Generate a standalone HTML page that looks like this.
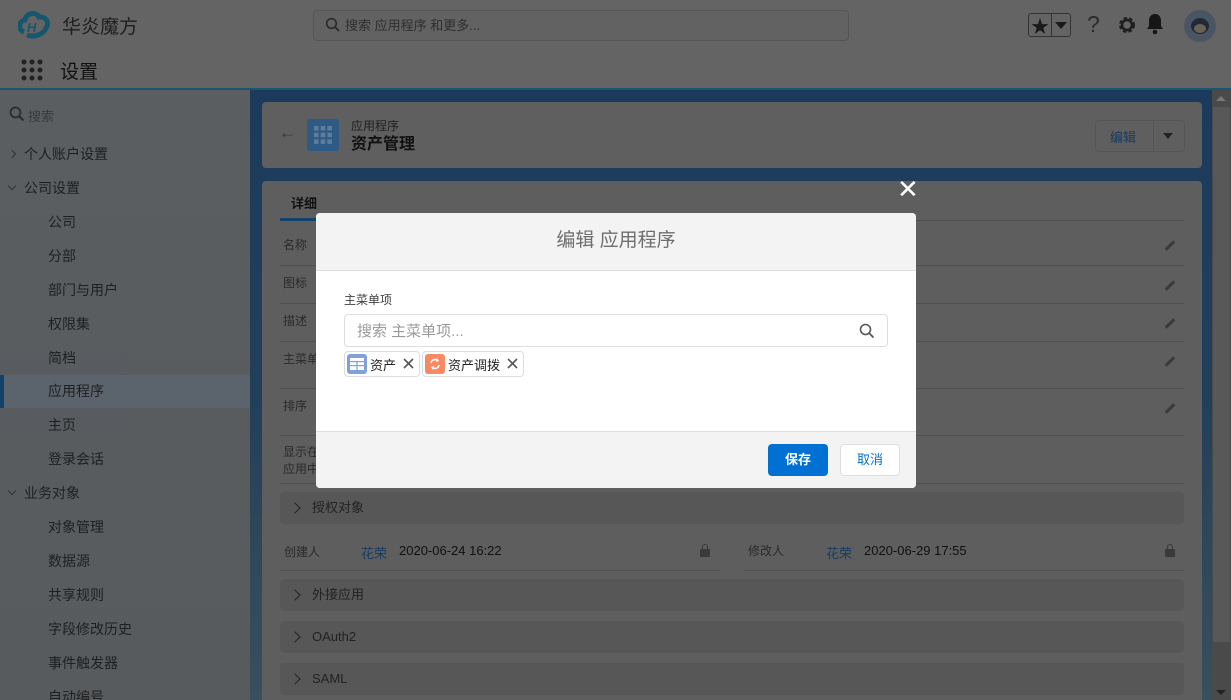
<!DOCTYPE html>
<html style="width:1231px;height:700px;overflow:hidden"><head><meta charset="utf-8"><style>
*{box-sizing:border-box;margin:0;padding:0}
body{width:1231px;height:700px;overflow:hidden;position:relative;background:#5e5e5e;font-family:"Liberation Sans","Noto Sans CJK SC",sans-serif;font-size:13px;color:#1c1c1c}
.a{position:absolute}
.side div{position:absolute;left:0;width:250px;height:34px;line-height:34px;font-size:14px;color:#1f1f1f}
.row{position:absolute;left:280px;width:904px;border-bottom:1px solid #505050;font-size:12px;color:#2a2a2a}
.sec{position:absolute;left:280px;width:904px;height:32px;background:#575757;border-radius:4px;line-height:32px;font-size:13px;color:#222;padding-left:32px}
.sec:before{content:"";position:absolute;left:11px;top:12px;width:7px;height:7px;border-right:1.6px solid #222;border-top:1.6px solid #222;transform:rotate(45deg)}
.pen{position:absolute;right:8px;width:12px;height:3px;background:#3a3a3a;transform:rotate(-45deg)}
</style></head><body>
<div class="a" style="left:0;top:0;width:1231px;height:88px;background:#646464"></div>
<div class="a" style="left:0;top:88px;width:1231px;height:2px;background:#1b5670"></div>
<svg class="a" style="left:18px;top:10px" width="32" height="30" viewBox="0 0 32 30"><path d="M6 22 C0 20 0 11 7 10 C8 3 18 1 21 7 C28 6 32 13 28 18 C26 24 16 28 9 25" fill="none" stroke="#15576e" stroke-width="5"/><text x="9" y="22" font-size="13" font-weight="bold" font-style="italic" fill="#15576e" font-family="Liberation Sans">H</text></svg>
<div class="a" style="left:62px;top:12px;font-size:19px;color:#1e1e1e">华炎魔方</div>
<div class="a" style="left:313px;top:10px;width:536px;height:31px;border:1px solid #555;border-radius:4px;background:#626262"></div>
<svg class="a" style="left:325px;top:17px" width="16" height="16"><circle cx="6.5" cy="6.5" r="4.8" fill="none" stroke="#2a2a2a" stroke-width="1.6"/><path d="M10 10l4 4" stroke="#2a2a2a" stroke-width="1.8"/></svg>
<div class="a" style="left:345px;top:15px;font-size:13px;color:#2e2e2e">搜索 应用程序 和更多...</div>
<div class="a" style="left:1028px;top:13px;width:43px;height:24px;border:1px solid #333;border-radius:3px"></div>
<div class="a" style="left:1051px;top:13px;width:1px;height:24px;background:#333"></div>
<div class="a" style="left:1031px;top:13px;font-size:18px;color:#1a1a1a">★</div>
<div class="a" style="left:1055px;top:22px;width:0;height:0;border-left:6px solid transparent;border-right:6px solid transparent;border-top:7px solid #1a1a1a"></div>
<div class="a" style="left:1087px;top:11px;font-size:23px;color:#2a2a2a">?</div>
<svg class="a" style="left:1118px;top:16px" width="18" height="18" viewBox="0 0 18 18"><circle cx="9" cy="9" r="6" fill="none" stroke="#1e1e1e" stroke-width="4" stroke-dasharray="3 2"/><circle cx="9" cy="9" r="5" fill="none" stroke="#1e1e1e" stroke-width="2.5"/></svg>
<svg class="a" style="left:1145px;top:13px" width="20" height="22" viewBox="0 0 20 22"><path d="M10 1c-4 0-6 3-6 7v5l-2 3h16l-2-3V8c0-4-2-7-6-7z" fill="#161616"/><circle cx="10" cy="19" r="2.3" fill="#161616"/></svg>
<div class="a" style="left:1184px;top:10px;width:32px;height:32px;border-radius:50%;background:#4a5563"></div>
<div class="a" style="left:1191px;top:18px;width:18px;height:16px;border-radius:50%;background:#1f2a36"></div>
<div class="a" style="left:1194px;top:24px;width:12px;height:9px;border-radius:50%;background:#6b6257"></div>
<svg class="a" style="left:21px;top:59px" width="22" height="22"><g fill="#222"><circle cx="3" cy="3" r="2.5"/><circle cx="11" cy="3" r="2.5"/><circle cx="19" cy="3" r="2.5"/><circle cx="3" cy="11" r="2.5"/><circle cx="11" cy="11" r="2.5"/><circle cx="19" cy="11" r="2.5"/><circle cx="3" cy="19" r="2.5"/><circle cx="11" cy="19" r="2.5"/><circle cx="19" cy="19" r="2.5"/></g></svg>
<div class="a" style="left:60px;top:57px;font-size:19px;color:#111">设置</div>
<div class="a" style="left:0;top:90px;width:250px;height:610px;background:linear-gradient(#5a5e61,#575b5e)"></div>
<svg class="a" style="left:9px;top:106px" width="16" height="16"><circle cx="6.5" cy="6.5" r="5" fill="none" stroke="#2a2a2a" stroke-width="1.7"/><path d="M10 10l4.5 4.5" stroke="#2a2a2a" stroke-width="2"/></svg>
<div class="a" style="left:28px;top:106px;font-size:13px;color:#3a3a3a">搜索</div>
<div class="a" style="left:0;top:375px;width:250px;height:33px;background:#5b646d"></div>
<div class="a" style="left:0;top:375px;width:4px;height:33px;background:#12426a"></div>
<div class="side">
<div style="top:137px;padding-left:24px">个人账户设置</div>
<div style="top:171px;padding-left:24px">公司设置</div>
<div style="top:205px;padding-left:48px">公司</div>
<div style="top:239px;padding-left:48px">分部</div>
<div style="top:273px;padding-left:48px">部门与用户</div>
<div style="top:307px;padding-left:48px">权限集</div>
<div style="top:341px;padding-left:48px">简档</div>
<div style="top:374px;padding-left:48px">应用程序</div>
<div style="top:408px;padding-left:48px">主页</div>
<div style="top:442px;padding-left:48px">登录会话</div>
<div style="top:476px;padding-left:24px">业务对象</div>
<div style="top:510px;padding-left:48px">对象管理</div>
<div style="top:544px;padding-left:48px">数据源</div>
<div style="top:578px;padding-left:48px">共享规则</div>
<div style="top:612px;padding-left:48px">字段修改历史</div>
<div style="top:646px;padding-left:48px">事件触发器</div>
<div style="top:680px;padding-left:48px">自动编号</div>
</div>
<div class="a" style="left:9px;top:151px;width:6px;height:6px;border-right:1.3px solid #333;border-top:1.3px solid #333;transform:rotate(45deg)"></div>
<div class="a" style="left:9px;top:183px;width:6px;height:6px;border-right:1.3px solid #333;border-bottom:1.3px solid #333;transform:rotate(45deg)"></div>
<div class="a" style="left:9px;top:488px;width:6px;height:6px;border-right:1.3px solid #333;border-bottom:1.3px solid #333;transform:rotate(45deg)"></div>
<div class="a" style="left:250px;top:90px;width:962px;height:610px;background:linear-gradient(180deg,#1c3a5c 0%,#223f5a 50%,#3a4f5c 100%)"></div>
<div class="a" style="left:1212px;top:90px;width:19px;height:610px;background:#4a4a4a"></div>
<div class="a" style="left:1213px;top:107px;width:17px;height:535px;background:#585858"></div>
<div class="a" style="left:1216px;top:96px;border-left:5px solid transparent;border-right:5px solid transparent;border-bottom:5px solid #777"></div>
<div class="a" style="left:1216px;top:690px;border-left:5px solid transparent;border-right:5px solid transparent;border-top:5px solid #222"></div>
<div class="a" style="left:262px;top:102px;width:940px;height:66px;background:#5f5f5f;border-radius:4px"></div>
<div class="a" style="left:279px;top:123px;font-size:17px;color:#333">←</div>
<div class="a" style="left:307px;top:119px;width:32px;height:32px;background:#2d5b85;border-radius:3px"></div>
<svg class="a" style="left:314px;top:126px" width="18" height="18"><g fill="#5f7d99"><rect x="0" y="0" width="4.5" height="4.5"/><rect x="6.7" y="0" width="4.5" height="4.5"/><rect x="13.4" y="0" width="4.5" height="4.5"/><rect x="0" y="6.7" width="4.5" height="4.5"/><rect x="6.7" y="6.7" width="4.5" height="4.5"/><rect x="13.4" y="6.7" width="4.5" height="4.5"/><rect x="0" y="13.4" width="4.5" height="4.5"/><rect x="6.7" y="13.4" width="4.5" height="4.5"/><rect x="13.4" y="13.4" width="4.5" height="4.5"/></g></svg>
<div class="a" style="left:351px;top:117px;font-size:12px;color:#1f1f1f">应用程序</div>
<div class="a" style="left:351px;top:130px;font-size:16px;font-weight:bold;color:#111">资产管理</div>
<div class="a" style="left:1095px;top:120px;width:90px;height:32px;border:1px solid #555;border-radius:4px"></div>
<div class="a" style="left:1153px;top:120px;width:1px;height:32px;background:#555"></div>
<div class="a" style="left:1110px;top:127px;font-size:13px;color:#163b60">编辑</div>
<div class="a" style="left:1163px;top:133px;border-left:5px solid transparent;border-right:5px solid transparent;border-top:6px solid #222"></div>
<div class="a" style="left:262px;top:181px;width:940px;height:519px;background:#5e5e5e;border-radius:4px 4px 0 0"></div>
<div class="a" style="left:291px;top:193px;font-size:13px;font-weight:bold;color:#111">详细</div>
<div class="a" style="left:280px;top:220px;width:904px;height:1px;background:#505050"></div>
<div class="a" style="left:280px;top:218px;width:40px;height:3px;background:#12426a"></div>
<div class="row" style="top:222px;height:44px"><span class="a" style="left:3px;top:14px">名称</span><span class="pen" style="top:22px"></span></div>
<div class="row" style="top:266px;height:38px"><span class="a" style="left:3px;top:8px">图标</span><span class="pen" style="top:18px"></span></div>
<div class="row" style="top:304px;height:38px"><span class="a" style="left:3px;top:8px">描述</span><span class="pen" style="top:18px"></span></div>
<div class="row" style="top:342px;height:47px"><span class="a" style="left:3px;top:8px">主菜单</span><span class="pen" style="top:18px"></span></div>
<div class="row" style="top:389px;height:47px"><span class="a" style="left:3px;top:8px">排序</span><span class="pen" style="top:18px"></span></div>
<div class="row" style="top:436px;height:48px"><span class="a" style="left:3px;top:8px;line-height:17px">显示在<br>应用中</span></div>
<div class="sec" style="top:492px">授权对象</div>
<div class="a" style="left:284px;top:543px;font-size:12px;color:#2a2a2a">创建人</div>
<div class="a" style="left:361px;top:543px;font-size:13px;color:#163b60">花荣</div>
<div class="a" style="left:399px;top:543px;font-size:13px;color:#111">2020-06-24 16:22</div>
<div class="a" style="left:280px;top:570px;width:440px;height:1px;background:#505050"></div>
<div class="a" style="left:748px;top:542px;font-size:12px;color:#2a2a2a">修改人</div>
<div class="a" style="left:826px;top:543px;font-size:13px;color:#163b60">花荣</div>
<div class="a" style="left:864px;top:543px;font-size:13px;color:#111">2020-06-29 17:55</div>
<div class="a" style="left:744px;top:570px;width:440px;height:1px;background:#505050"></div>
<div class="a" style="left:700px;top:549px;width:10px;height:8px;background:#3a3a3a;border-radius:1px"></div>
<div class="a" style="left:702px;top:544px;width:6px;height:7px;border:1.5px solid #3a3a3a;border-radius:3px 3px 0 0"></div>
<div class="a" style="left:1165px;top:549px;width:10px;height:8px;background:#3a3a3a;border-radius:1px"></div>
<div class="a" style="left:1167px;top:544px;width:6px;height:7px;border:1.5px solid #3a3a3a;border-radius:3px 3px 0 0"></div>
<div class="sec" style="top:579px">外接应用</div>
<div class="sec" style="top:621px">OAuth2</div>
<div class="sec" style="top:663px">SAML</div>
<div class="a" style="left:897px;top:174px;font-size:26px;color:#fff;line-height:30px">✕</div>
<div class="a" style="left:316px;top:213px;width:600px;height:275px;background:#fff;border-radius:4px;overflow:hidden">
 <div class="a" style="left:0;top:0;width:600px;height:58px;background:#f3f3f3;border-bottom:1px solid #ddd;text-align:center;line-height:56px;font-size:19px;color:#6e6e6e">编辑 应用程序</div>
 <div class="a" style="left:28px;top:78px;font-size:12px;color:#3e3e3e">主菜单项</div>
 <div class="a" style="left:28px;top:101px;width:544px;height:33px;border:1px solid #ddd;border-radius:4px"></div>
 <div class="a" style="left:41px;top:107px;font-size:15px;color:#9a9a9a">搜索 主菜单项...</div>
 <svg class="a" style="left:543px;top:110px" width="16" height="16"><circle cx="6.5" cy="6.5" r="5" fill="none" stroke="#555" stroke-width="1.6"/><path d="M10 10l4.5 4.5" stroke="#555" stroke-width="1.8"/></svg>
 <div class="a" style="left:28px;top:138px;width:76px;height:26px;border:1px solid #ddd;border-radius:4px"></div>
 <div class="a" style="left:31px;top:141px;width:20px;height:20px;background:#7fa1dc;border-radius:3px"></div>
 <svg class="a" style="left:34px;top:145px" width="14" height="12"><rect x="0" y="0" width="14" height="12" fill="#fff"/><g fill="#7fa1dc"><rect x="0" y="3" width="14" height="1.2"/><rect x="0" y="7" width="14" height="1.2"/><rect x="6.4" y="3" width="1.2" height="9"/></g></svg>
 <div class="a" style="left:54px;top:142px;font-size:13px;color:#222">资产</div>
 <svg class="a" style="left:87px;top:145px" width="11" height="11"><path d="M1 1l9 9M10 1l-9 9" stroke="#555" stroke-width="1.6"/></svg>
 <div class="a" style="left:106px;top:138px;width:102px;height:26px;border:1px solid #ddd;border-radius:4px"></div>
 <div class="a" style="left:109px;top:141px;width:20px;height:20px;background:#f88962;border-radius:3px"></div>
 <svg class="a" style="left:112px;top:144px" width="14" height="14"><path d="M3 6a4 4 0 0 1 7-2M11 8a4 4 0 0 1-7 2" fill="none" stroke="#fff" stroke-width="1.6"/><path d="M9 1l2 3-3 1zM5 13l-2-3 3-1z" fill="#fff"/></svg>
 <div class="a" style="left:132px;top:142px;font-size:13px;color:#222">资产调拨</div>
 <svg class="a" style="left:191px;top:145px" width="11" height="11"><path d="M1 1l9 9M10 1l-9 9" stroke="#555" stroke-width="1.6"/></svg>
 <div class="a" style="left:0;top:218px;width:600px;height:57px;background:#f3f3f3;border-top:1px solid #ddd"></div>
 <div class="a" style="left:452px;top:231px;width:60px;height:32px;background:#0070d2;border-radius:4px;color:#fff;text-align:center;line-height:32px;font-size:13px;font-weight:bold">保存</div>
 <div class="a" style="left:524px;top:231px;width:60px;height:32px;background:#fff;border:1px solid #ddd;border-radius:4px;color:#0070d2;text-align:center;line-height:30px;font-size:13px">取消</div>
</div>
</body></html>
